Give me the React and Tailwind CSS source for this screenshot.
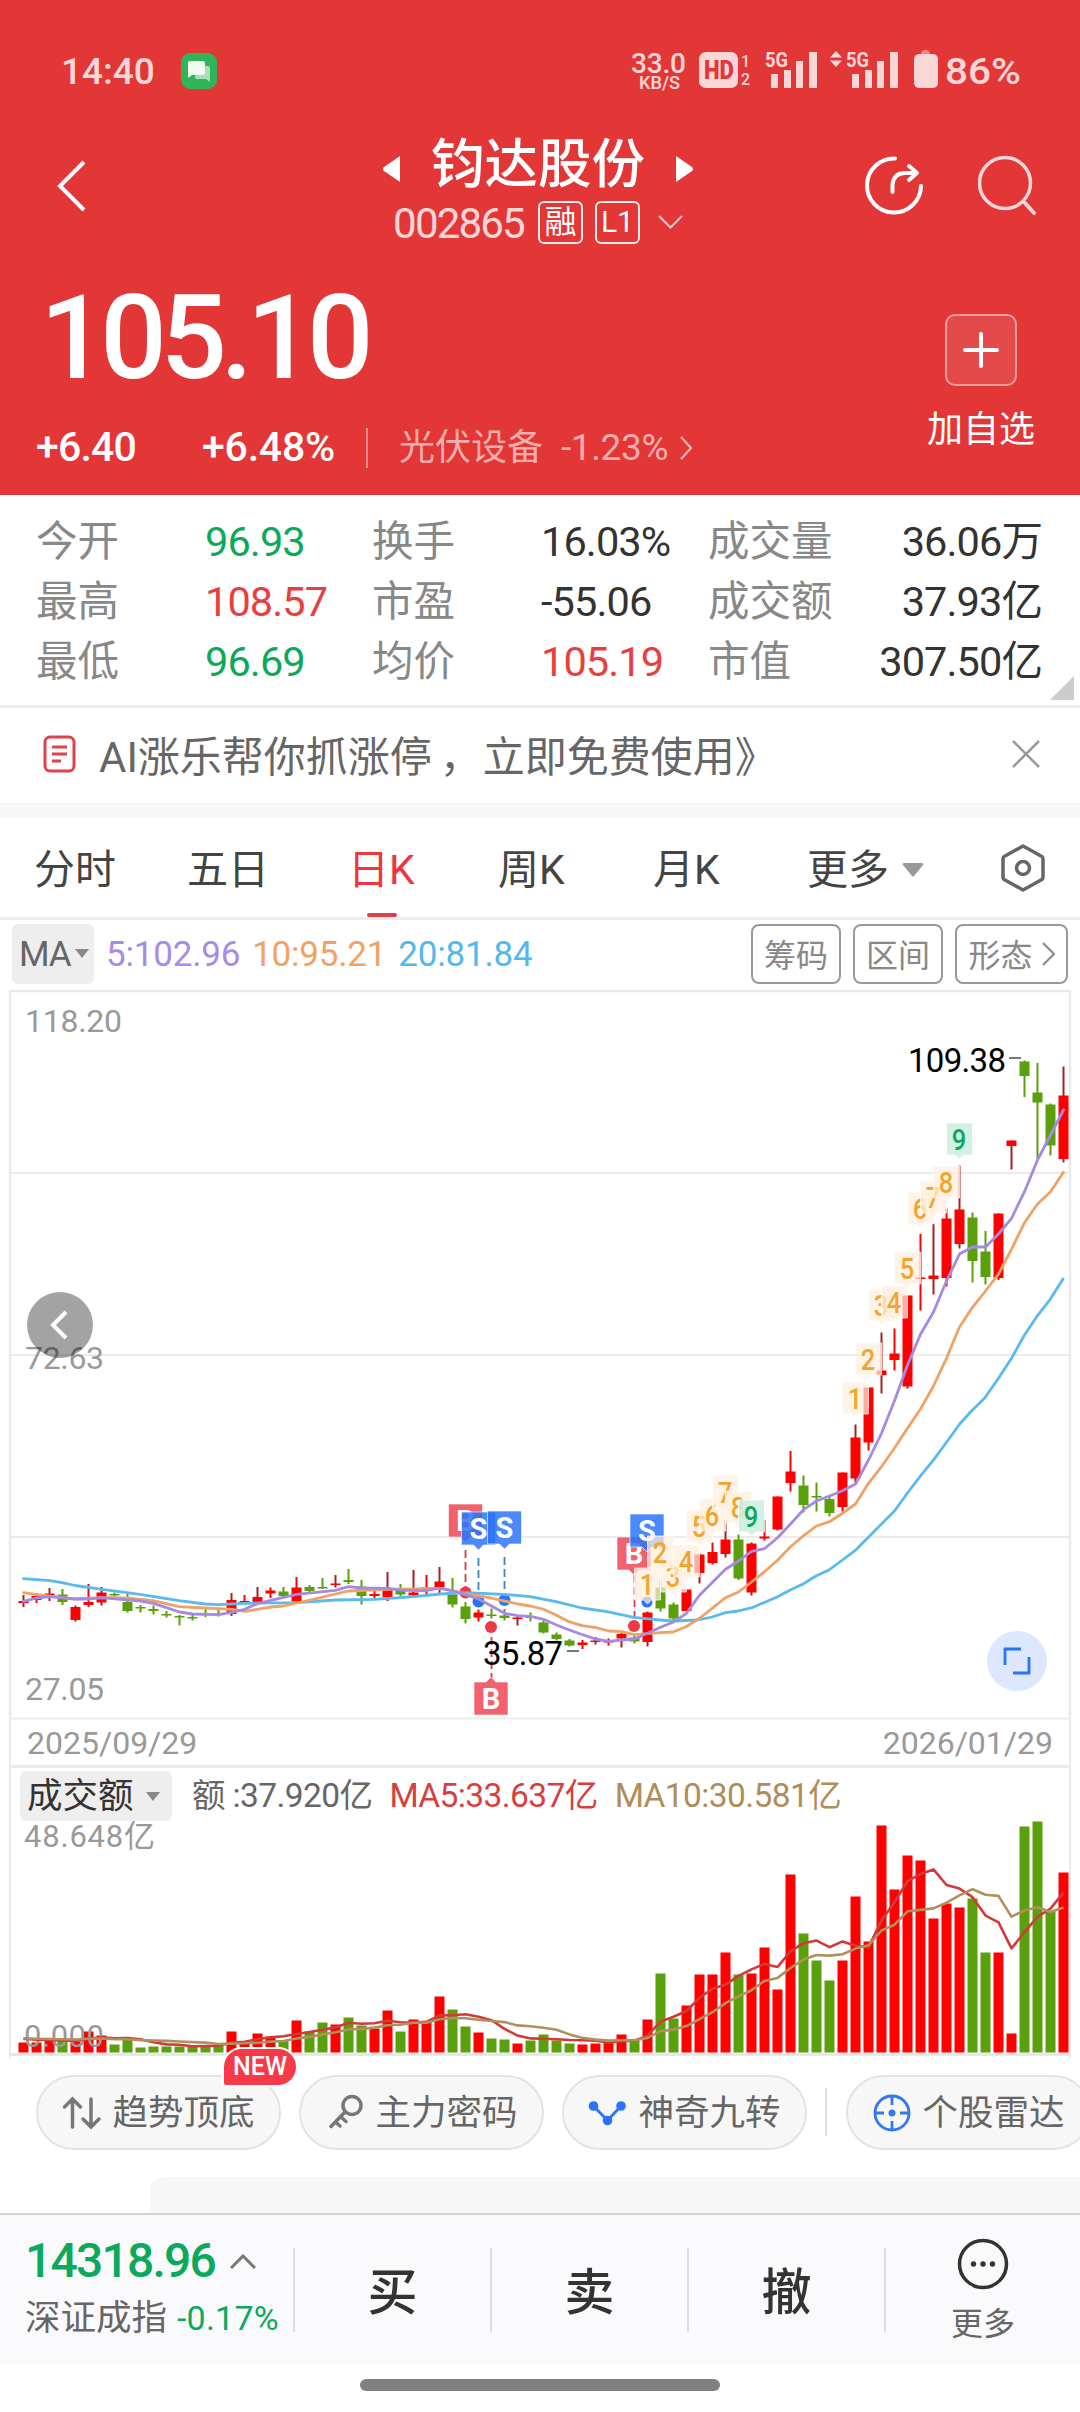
import React from 'react'
import clsx from 'clsx'

const RED = '#ff0000'
const GREEN = '#5aa00c'

// [color, high, low, body top, body bottom, turnover]
const candles = [
  ['r', 1595, 1607, 1601, 1603, 10],
  ['r', 1593, 1603, 1596, 1600, 10],
  ['r', 1588, 1601, 1593.5, 1596, 12],
  ['g', 1589, 1605, 1594.5, 1602, 12],
  ['r', 1605.5, 1621.5, 1607, 1620, 11],
  ['r', 1584, 1607, 1602, 1605, 21],
  ['r', 1587, 1605.5, 1592.5, 1602.5, 17],
  ['g', 1592.5, 1596.5, 1594, 1595.5, 8],
  ['g', 1594, 1612.5, 1602, 1611, 13],
  ['g', 1605, 1612.5, 1607, 1608.5, 5],
  ['g', 1605.5, 1614.5, 1609, 1611, 6],
  ['g', 1611, 1617.5, 1614, 1615.5, 6],
  ['g', 1615, 1625.5, 1616, 1617.5, 6],
  ['g', 1614, 1620.5, 1617, 1618.5, 6],
  ['g', 1609, 1617, 1613.5, 1615, 6],
  ['g', 1608, 1616.5, 1613.5, 1615, 7],
  ['r', 1593, 1616, 1600, 1614, 21],
  ['r', 1595, 1604, 1601, 1603, 11],
  ['r', 1587, 1602.5, 1597, 1602.5, 19],
  ['r', 1587.5, 1598, 1590.5, 1593.5, 16],
  ['g', 1587, 1598, 1591.5, 1596, 12],
  ['r', 1577, 1602, 1587.5, 1601.5, 32],
  ['g', 1585, 1593.5, 1587, 1591, 21],
  ['g', 1578, 1589, 1587, 1588.5, 30],
  ['r', 1575, 1587.5, 1583.5, 1585, 28],
  ['g', 1569, 1584, 1580, 1582, 35],
  ['g', 1580, 1604.5, 1586.5, 1596, 27],
  ['r', 1591, 1598.5, 1594, 1596, 24],
  ['r', 1572, 1601, 1590, 1597.5, 42],
  ['g', 1584, 1596, 1591, 1594.5, 21],
  ['r', 1570, 1598, 1592.5, 1595.5, 33],
  ['r', 1575, 1594, 1587.5, 1589, 31],
  ['r', 1567, 1595, 1581.5, 1587.5, 56],
  ['g', 1578, 1607.5, 1594.5, 1604.5, 43],
  ['g', 1602, 1623.5, 1606.5, 1619, 26],
  ['r', 1609.5, 1621.5, 1612.5, 1617.5, 20],
  ['g', 1608.5, 1618.5, 1614.5, 1616, 14],
  ['g', 1609, 1620.5, 1615.5, 1618, 13],
  ['r', 1616.5, 1625.5, 1617.5, 1619, 9],
  ['g', 1612.5, 1621.5, 1616, 1618, 12],
  ['g', 1620.5, 1633.5, 1622.5, 1632.5, 18],
  ['g', 1632.5, 1640.5, 1634.5, 1639, 12],
  ['g', 1639, 1646.5, 1640.5, 1645.5, 9],
  ['r', 1640, 1649, 1642.5, 1645, 8],
  ['r', 1637, 1644.5, 1640.5, 1642, 9],
  ['r', 1638.5, 1645.5, 1641, 1642.5, 10],
  ['r', 1633, 1647.5, 1634, 1638.5, 18],
  ['g', 1635.5, 1643.5, 1637.5, 1641.5, 12],
  ['r', 1611.5, 1646.5, 1612.5, 1642, 33],
  ['g', 1579.5, 1611.5, 1587.5, 1608.5, 79],
  ['g', 1602.5, 1620, 1604.5, 1618.5, 34],
  ['r', 1589.5, 1611, 1589.5, 1611, 47],
  ['r', 1553.5, 1583.5, 1554.5, 1573, 78],
  ['r', 1542.5, 1564.5, 1552, 1563, 78],
  ['r', 1519.5, 1557.5, 1539.5, 1554, 100],
  ['g', 1534.5, 1580, 1539.5, 1578.5, 78],
  ['r', 1542.5, 1595.5, 1543.5, 1592.5, 79],
  ['r', 1520, 1540.5, 1536.5, 1538.5, 105],
  ['r', 1496.5, 1530.5, 1496.5, 1529.5, 63],
  ['r', 1451, 1491.5, 1471.5, 1483, 178],
  ['g', 1475.5, 1512.5, 1485.5, 1505, 119],
  ['g', 1482.5, 1511.5, 1496, 1497.5, 92],
  ['g', 1496, 1516.5, 1499, 1513, 72],
  ['r', 1472.5, 1511.5, 1472.5, 1507, 92],
  ['r', 1424.5, 1484.5, 1437.5, 1478.5, 156],
  ['r', 1387.5, 1450.5, 1387.5, 1442.5, 111],
  ['r', 1332.5, 1393.5, 1370.5, 1375, 227],
  ['r', 1328.5, 1370.5, 1353.5, 1360, 163],
  ['r', 1295.5, 1388.5, 1295.5, 1386.5, 197],
  ['r', 1234, 1310.5, 1277.5, 1279, 192],
  ['r', 1223.5, 1294.5, 1275.5, 1279, 134],
  ['r', 1208.5, 1286.5, 1218.5, 1278, 149],
  ['r', 1165.5, 1248.5, 1209.5, 1244, 145],
  ['g', 1212.5, 1282.5, 1217.5, 1261, 154],
  ['g', 1231, 1284.5, 1251.5, 1277, 100],
  ['r', 1213.5, 1280, 1213.5, 1278, 100],
  ['r', 1140.5, 1169.5, 1140.5, 1146, 19],
  ['g', 1060.5, 1097, 1061.5, 1076, 226],
  ['g', 1063, 1158.5, 1092.5, 1102.5, 231],
  ['g', 1103.5, 1155.5, 1104.5, 1145.5, 141],
  ['r', 1066.5, 1162.5, 1095.5, 1159, 180],
]

const candleX = (i) => 23.5 + 13 * i

const ma5 =
  '23.5,1601.3 36.5,1598 49.5,1596.7 75.5,1599 88.5,1599 101.5,1597.7 140.5,1601 153.5,1603.3 179.5,1612 192.5,1614 205.5,1614.3 218.5,1614.7 231.5,1612.3 244.5,1609.3 257.5,1603.7 283.5,1597.3 296.5,1594.3 335.5,1590.3 348.5,1586.7 361.5,1588 387.5,1588.3 400.5,1590 413.5,1590.7 426.5,1590.7 439.5,1588 452.5,1590.7 465.5,1594.7 478.5,1599 491.5,1606 504.5,1613.3 517.5,1615.7 530.5,1616.3 543.5,1619.3 556.5,1625 569.5,1630 582.5,1634.7 595.5,1639 608.5,1641.3 621.5,1640 634.5,1639 647.5,1633.3 660.5,1627.3 673.5,1622 686.5,1613.3 699.5,1595.3 712.5,1582.3 725.5,1569.3 738.5,1561 751.5,1551.3 764.5,1548.7 777.5,1537.7 790.5,1524 803.5,1509.7 816.5,1501 829.5,1496 842.5,1490.7 855.5,1484 868.5,1460 881.5,1433.3 894.5,1400.7 907.5,1365 920.5,1334.3 933.5,1312 946.5,1281 959.5,1254 972.5,1247 985.5,1247 998.5,1234 1011.5,1218.3 1024.5,1191.7 1037.5,1160 1050.5,1135 1063.5,1110'
const ma10 =
  '23.5,1592.7 37,1594.7 75,1599 102,1597.7 127,1598 153,1600.7 179,1606.7 205,1608 232,1609.3 245,1611.3 271,1607 283,1606 309,1600.3 348,1591 388,1589.3 440,1588.3 465,1593.7 491,1598 518,1604 530,1606 543,1609 556,1615 569,1621.7 582,1625.7 596,1627.7 609,1631 622,1631.7 634,1634.7 660,1632.7 673,1632 686,1626.7 699.5,1618.3 725.5,1597.7 738.5,1592 751.5,1582 764.5,1571.7 777.5,1560.3 790.5,1546.7 803.5,1535.7 816.5,1526 829.5,1521.7 842.5,1513.3 855.5,1504 868.5,1483.3 881.5,1466.7 894.5,1448 907.5,1428.3 920.5,1409 933.5,1386 946.5,1358.3 959.5,1327 972.5,1307.3 985.5,1291 998.5,1274 1011.5,1249.3 1024.5,1222.7 1037.5,1204 1050.5,1191.7 1063.5,1172.3'
const ma20 =
  '23.5,1578.7 50,1580.7 62,1582.7 75,1585.5 102,1589.3 140,1594.3 179,1600.7 205,1604 218,1604.7 245,1603.3 297,1602.7 336,1600 375,1599.3 414,1596.7 440,1594 465,1592.7 504,1594.3 530,1596.7 556,1601.7 582,1608 607,1611.7 633.5,1617.3 660,1620 673,1621 698,1620 712,1617 725.6,1612.7 738,1611 752,1607.7 777.6,1596.7 790.7,1589.7 803,1584 816,1576 829,1570 855,1550.7 894.7,1510.7 906.7,1494 920.7,1475.7 933,1460.7 946.7,1442 959.7,1424 971.7,1410.7 984.7,1398 998,1379 1011.7,1358 1024,1335.7 1036.7,1316.7 1049.7,1300 1063,1279'

// nine-turn counters: [label, candle index, box top]
const counters = [
  ['1', 48, 1568],
  ['3', 50, 1560],
  ['2', 49, 1536],
  ['4', 51, 1545],
  ['5', 52, 1510],
  ['6', 53, 1499],
  ['7', 54, 1476],
  ['8', 55, 1491],
  ['9', 56, 1500],
  ['1', 64, 1382],
  ['2', 65, 1343],
  ['3', 66, 1289],
  ['4', 67, 1286],
  ['5', 68, 1252],
  ['6', 69, 1192],
  ['7', 70, 1181],
  ['8', 71, 1166],
  ['9', 72, 1123],
]

const volumeAverage = (n) =>
  candles
    .map((_, i) => {
      let sum = 0
      for (let k = i - n + 1; k <= i; k++) sum += k < 0 ? 14 : candles[k][5]
      return `${candleX(i)},${2052 - sum / n}`
    })
    .join(' ')

function Counter({ label, index, top }) {
  const x = candleX(index)
  const nine = label == '9'
  return (
    <g>
      <path
        d={`M${x - 13} ${top}h26v32h-9l-4 4l-4-4h-9z`}
        fill={nine ? '#cdeee0' : '#feeedd'}
        fillOpacity={nine ? 0.9 : 0.72}
        stroke="#fff"
        strokeOpacity="0.7"
      />
      <text
        x={x - 0.5}
        y={top + 27}
        textAnchor="middle"
        fontSize="30"
        fontWeight="500"
        textLength="14.5"
        lengthAdjust="spacingAndGlyphs"
        fill={nine ? '#10a75d' : '#f3a42f'}
      >
        {label}
      </text>
    </g>
  )
}

function Signal({ type, x, top, up }) {
  return (
    <g>
      <path
        d={
          up
            ? `M${x - 17} ${top}h12l5-5l5 5h12v33h-34z`
            : `M${x - 17} ${top}h34v33h-12l-5 5l-5-5h-12z`
        }
        fill={type == 'B' ? '#f04352' : '#2874fc'}
        fillOpacity="0.84"
        stroke="#fff"
        strokeOpacity="0.6"
      />
      <text
        x={x}
        y={top + 27}
        textAnchor="middle"
        fontSize="29"
        fontWeight="700"
        fill="#fff"
      >
        {type}
      </text>
    </g>
  )
}

function StatusBar() {
  return (
    <div className="flex h-[100px] items-start pt-[50px] pl-[61px] text-white/80">
      <span className="mt-[2px] w-[120px] text-[37px] leading-10 font-medium">14:40</span>
      <svg className="mt-[3px] shrink-0" width="36" height="36" viewBox="0 0 36 36">
        <rect width="36" height="36" rx="9" fill="#2fb457" />
        <path d="M14 13h13a2 2 0 0 1 2 2v14l-4-3H16a2 2 0 0 1-2-2z" fill="#a9dfb8" />
        <path d="M9 8h13a2 2 0 0 1 2 2v10a2 2 0 0 1-2 2H11l-4 3V10a2 2 0 0 1 2-2z" fill="#f0fbf2" />
      </svg>
      <svg className="ml-[403px] shrink-0 overflow-visible" width="410" height="44" viewBox="620 50 410 44" fill="currentColor">
        <text x="631" y="73" fontSize="28" fontWeight="500" textLength="55">33.0</text>
        <text x="639" y="89" fontSize="19" fontWeight="500" textLength="41" lengthAdjust="spacingAndGlyphs">KB/S</text>
        <rect x="699" y="52" width="39" height="36" rx="7" />
        <text x="704" y="79" fontSize="25" fontWeight="900" textLength="30" lengthAdjust="spacingAndGlyphs" fill="#e33636">HD</text>
        <text x="741" y="67" fontSize="16" fontWeight="500">1</text>
        <text x="741" y="85" fontSize="16" fontWeight="500">2</text>
        <text x="765" y="67" fontSize="21" fontWeight="700" textLength="23" lengthAdjust="spacingAndGlyphs">5G</text>
        <path d="M771 74h7v14h-7zM784 70h7v18h-7zM796 61h7v27h-7zM809 52h8v36h-8z" />
        <path d="M830 57.5l6-6.5l6 6.5zM830 60.5h12l-6 6.5z" />
        <text x="846" y="67" fontSize="21" fontWeight="700" textLength="23" lengthAdjust="spacingAndGlyphs">5G</text>
        <path d="M852 74h7v14h-7zM865 70h7v18h-7zM877 61h7v27h-7zM890 52h8v36h-8z" />
        <path d="M921 54q0-4 4.500-4t4.500 4z" opacity="0.5" />
        <rect x="914" y="54" width="24" height="34" rx="5" />
        <text x="945" y="84" fontSize="36" fontWeight="500" textLength="76" lengthAdjust="spacingAndGlyphs">86%</text>
      </svg>
    </div>
  )
}

function TitleBar() {
  return (
    <div className="flex h-[160px] justify-between pr-[42px] pl-[56px]">
      <svg className="mt-[60px] mr-[80px]" width="32" height="52" viewBox="0 0 32 52" fill="none" stroke="#fff" strokeWidth="4">
        <path d="M28 2L4 26L28 50" />
      </svg>
      <div className="mr-[31px] ml-[75px] flex flex-col items-center pt-[34px]">
        <div className="flex items-center gap-[31px]">
          <svg width="18" height="28" viewBox="0 0 18 28" className="mt-2">
            <path d="M18 1v26L2 16q-2-2 0-4z" fill="#fff" />
          </svg>
          <h1 className="text-[53.5px] leading-[62px] font-medium">钧达股份</h1>
          <svg width="18" height="28" viewBox="0 0 18 28" className="mt-2">
            <path d="M0 1v26l16-11q2-2 0-4z" fill="#fff" />
          </svg>
        </div>
        <div className="mt-[2px] flex items-center">
          <span className="mt-1 text-[42px] leading-[44px] tracking-[-1.8px] text-white/80">002865</span>
          <span className="ml-[14px] flex h-[43px] w-[45px] items-center justify-center rounded-md border-2 border-white/90 text-[32px] leading-none">
            融
          </span>
          <span className="ml-3 flex h-[43px] w-[45px] items-center justify-center rounded-md border-2 border-white/90 text-[30px] leading-none">
            L1
          </span>
          <svg className="ml-[18px]" width="25" height="14" viewBox="0 0 25 14" fill="none" stroke="#fff" strokeOpacity="0.7" strokeWidth="2">
            <path d="M1 1L12.5 12.5L24 1" />
          </svg>
        </div>
      </div>
      <div className="flex gap-[54px] pt-[54px]">
        <svg width="60" height="64" viewBox="0 0 60 64" fill="none" stroke="#fff" strokeWidth="4" strokeLinecap="round" strokeLinejoin="round">
          <path d="M31 4.500A27 27 0 1 0 57 32" />
          <path d="M28.500 38V31Q29.500 19 41 19H52M45 12l8 7l-8 7" />
        </svg>
        <svg width="60" height="64" viewBox="0 0 60 64" fill="none" stroke="#fff" strokeOpacity="0.8" strokeWidth="3.5">
          <circle cx="27" cy="29" r="25.5" />
          <path d="M47 49l9 10" strokeWidth="4" strokeLinecap="round" />
        </svg>
      </div>
    </div>
  )
}

function PriceBlock() {
  return (
    <div className="flex h-[235px] justify-between pr-[45px] pl-[36px]">
      <div className="pt-[14px]">
        <div className="ml-1 text-[117px] leading-[128px] font-medium tracking-[-6.3px]">105.10</div>
        <div className="mt-[23px] flex h-[46px] items-center">
          <span className="w-[166px] text-[41px] font-medium tracking-[-0.8px]">+6.40</span>
          <span className="w-[164px] text-[41px] font-medium tracking-[-0.2px]">+6.48%</span>
          <span className="h-[40px] w-[2px] bg-white/40" />
          <span className="ml-[31px] text-[36px] text-white/60">光伏设备</span>
          <span className="ml-[18px] text-[37px] tracking-[-0.4px] text-white/60">-1.23%</span>
          <svg className="ml-[12px]" width="12" height="24" viewBox="0 0 12 24" fill="none" stroke="#fff" strokeOpacity="0.65" strokeWidth="2">
            <path d="M1 1l10 11L1 23" />
          </svg>
        </div>
      </div>
      <div className="flex flex-col items-center pt-[54px]">
        <div className="flex h-[72px] w-[72px] items-center justify-center rounded-[10px] border-2 border-white/45 bg-white/10">
          <svg width="36" height="36" viewBox="0 0 36 36" stroke="#fff" strokeWidth="4" strokeLinecap="round">
            <path d="M2 18h32M18 2v32" />
          </svg>
        </div>
        <span className="mt-[23px] text-[36px] leading-[42px]">加自选</span>
      </div>
    </div>
  )
}

const quotes = [
  ['今开', '96.93', 'text-[#0aa95b]', '换手', '16.03%', 'text-[#333]', '成交量', '36.06万'],
  ['最高', '108.57', 'text-[#ea3d3d]', '市盈', '-55.06', 'text-[#333]', '成交额', '37.93亿'],
  ['最低', '96.69', 'text-[#0aa95b]', '均价', '105.19', 'text-[#ea3d3d]', '市值', '307.50亿'],
]

function Quotes() {
  return (
    <div className="relative h-[213px] border-b-[3px] border-[#ececec] pt-[17px] pr-[38px] pl-[36px]">
      {quotes.map((q) => (
        <div key={q[0]} className="flex h-[60px] items-center text-[41.5px] leading-[60px] tracking-[-0.9px]">
          <span className="w-[169px] tracking-normal text-[#888]">{q[0]}</span>
          <span className={clsx('w-[167px]', q[2])}>{q[1]}</span>
          <span className="w-[169px] tracking-normal text-[#888]">{q[3]}</span>
          <span className={clsx('w-[167px]', q[5])}>{q[4]}</span>
          <span className="tracking-normal text-[#888]">{q[6]}</span>
          <span className="ml-auto text-[#333]">{q[7]}</span>
        </div>
      ))}
      <svg className="absolute right-[6px] bottom-[5px]" width="24" height="24">
        <path d="M24 0v24H0z" fill="#ccc" />
      </svg>
    </div>
  )
}

function Banner() {
  return (
    <div className="flex h-[95px] items-center pr-[40px] pl-[43px] text-[#666]">
      <svg className="-mt-1" width="33" height="38" viewBox="0 0 33 38" fill="none" stroke="#e0424d" strokeWidth="3">
        <rect x="2" y="2" width="29" height="34" rx="5" />
        <path d="M9 12h15M9 19h15M9 26h9" />
      </svg>
      <p className="mt-1 ml-[23px] text-[42px] leading-[60px] whitespace-pre">
        AI涨乐帮你抓涨停<span className="ml-2">，</span><span className="ml-[1px]">立即免费使用》</span>
      </p>
      <svg className="-mt-1 ml-auto" width="28" height="28" viewBox="0 0 28 28" stroke="#999" strokeWidth="2.5">
        <path d="M1 1l26 26M27 1L1 27" />
      </svg>
    </div>
  )
}

function Tabs() {
  const tabs = [
    ['分时', 'w-[153px]'],
    ['五日', 'w-[161px]'],
    ['日K', 'w-[150px]'],
    ['周K', 'w-[155px]'],
    ['月K', 'w-[154px]'],
    ['更多', 'w-[93px]'],
  ]
  return (
    <div className="flex h-[102px] items-center border-b-[3px] border-[#ececec] pl-[34px] text-[41px] text-[#444]">
      {tabs.map((t) => (
        <div key={t[0]} className={clsx('relative h-[99px] pt-[3px] leading-[99px]', t[1], t[0] == '日K' && 'text-[#f0353f]')}>
          {t[0]}
          {t[0] == '日K' && <span className="absolute bottom-0 left-[19px] h-1 w-[30px] rounded bg-[#dd4048]" />}
        </div>
      ))}
      <svg className="mt-1 ml-[2px]" width="22" height="14">
        <path d="M2 0h18q2 0 1 2L12 13q-1 1-2 0L1 2q-1-2 1-2" fill="#999" />
      </svg>
      <svg className="ml-[77px]" width="44" height="48" viewBox="0 0 44 48" fill="none" stroke="#666" strokeWidth="3.5">
        <path d="M22 2L40 12q2 1 2 3v18q0 2-2 3L22 46L4 36q-2-1-2-3V15q0-2 2-3z" strokeLinejoin="round" />
        <circle cx="22" cy="24" r="6.5" />
      </svg>
    </div>
  )
}

function MaRow() {
  return (
    <div className="flex h-[68px] items-center pr-[12px] pl-[12px] text-[35px]">
      <div className="flex h-[60px] w-[82px] items-center rounded-md bg-[#eee] pt-[3px] pl-[7px] tracking-[-1px] text-[#666]">
        MA
        <svg width="14" height="10" className="-mt-1 ml-1">
          <path d="M0 0h14L7 9z" fill="#888" />
        </svg>
      </div>
      <div className="mt-[2px] ml-[12px] flex gap-[12px] tracking-[-0.2px]">
        <span className="text-[#a78be8]">5:102.96</span>
        <span className="text-[#f2a262]">10:95.21</span>
        <span className="text-[#54b8ee]">20:81.84</span>
      </div>
      <div className="ml-auto flex gap-[12px] text-[32px] text-[#888]">
        <span className="flex h-[60px] w-[90px] items-center justify-center rounded-lg border-2 border-[#999] pt-1">筹码</span>
        <span className="flex h-[60px] w-[90px] items-center justify-center rounded-lg border-2 border-[#999] pt-1">区间</span>
        <span className="flex h-[60px] w-[113px] items-center justify-center gap-[9px] rounded-lg border-2 border-[#999] pt-1">
          形态
          <svg className="-mt-1" width="13" height="24" viewBox="0 0 13 24" fill="none" stroke="#888" strokeWidth="2">
            <path d="M1 1l11 11L1 23" />
          </svg>
        </span>
      </div>
    </div>
  )
}

function PriceChart() {
  return (
    <svg className="block" width="1080" height="732" viewBox="0 988 1080 732">
      <path d="M10 1720V991H1070V1720" fill="none" stroke="#eaeaea" strokeWidth="2.5" />
      <path d="M10 1173H1070M10 1355H1070M10 1537H1070M10 1718.5H1070" stroke="#ebebeb" strokeWidth="2" />
      <g fontSize="32" fill="#999">
        <text x="25" y="1032" textLength="97">118.20</text>
        <text x="25" y="1369" textLength="79">72.63</text>
        <text x="25" y="1700" textLength="79">27.05</text>
      </g>
      {candles.map((c, i) => {
        const color = c[0] == 'r' ? RED : GREEN
        return (
          <g key={i}>
            <rect x={candleX(i) - 1} y={c[1]} width="2" height={c[2] - c[1]} fill={c[0] == 'r' && i % 2 == 0 ? '#a52222' : color} />
            <rect x={candleX(i) - 5} y={c[3]} width="10" height={c[4] - c[3]} fill={color} />
          </g>
        )
      })}
      <g strokeWidth="1.8" strokeDasharray="8 4" fill="none">
        <path d="M465.5 1550V1590M491.5 1637V1678M634.5 1575V1617" stroke="#e0364a" />
        <path d="M478.5 1558V1596M504.5 1557V1594M647.5 1550V1598" stroke="#3f83bd" />
      </g>
      <circle cx="465.5" cy="1592.5" r="6" fill="#ee3a46" />
      <circle cx="478.5" cy="1601.5" r="6" fill="#2874fc" />
      <circle cx="504.5" cy="1600" r="6" fill="#2874fc" />
      <circle cx="491" cy="1627" r="6" fill="#ee3a46" />
      <circle cx="634" cy="1626" r="6" fill="#ee3a46" />
      <circle cx="647" cy="1602" r="5.5" fill="#2874fc" />
      <g fill="none" strokeWidth="2.8" strokeLinejoin="round" strokeLinecap="round">
        <polyline points={ma20} stroke="#58baee" />
        <polyline points={ma10} stroke="#f0a266" />
        <polyline points={ma5} stroke="#a48ae2" />
      </g>
      <text x="483" y="1665" fontSize="33" textLength="80">35.87</text>
      <path d="M567 1651h12M1009 1058h12" stroke="#777" strokeWidth="2" />
      <text x="908" y="1072" fontSize="33" textLength="98">109.38</text>
      <Signal type="B" x={465.5} top={1504} />
      <Signal type="S" x={478.5} top={1512} />
      <Signal type="S" x={504.5} top={1511} />
      <Signal type="B" x={491} top={1682} up />
      <Signal type="B" x={634} top={1537} />
      <Signal type="S" x={647} top={1514} />
      {counters.map((c) => (
        <Counter key={c[0] + '-' + c[1]} label={c[0]} index={c[1]} top={c[2]} />
      ))}
      {/* scroll back / fullscreen buttons */}
      <circle cx="60" cy="1325" r="33" fill="#000" fillOpacity="0.36" />
      <path d="M66 1312l-13 13l13 13" fill="none" stroke="#fff" strokeWidth="4" />
      <circle cx="1017" cy="1661" r="30" fill="#dde7fd" />
      <path d="M1005 1665v-16h16M1029 1657v16h-16" fill="none" stroke="#2874fc" strokeWidth="2.8" />
    </svg>
  )
}

function VolumeChart() {
  return (
    <div className="relative mx-[9px] h-[293px] border-x-2 border-t-[3px] border-[#eaeaea]">
      <div className="relative z-10 flex h-[56px] items-center pl-[9px] text-[33.5px] tracking-[-0.6px]">
        <div className="flex h-[50px] w-[152px] items-center rounded-md bg-[#eee] pt-[2px] pl-[7px] text-[35.5px] tracking-normal text-[#333]">
          成交额
          <svg width="14" height="10" className="ml-[12px]">
            <path d="M0 0h14L7 9z" fill="#888" />
          </svg>
        </div>
        <span className="mt-px ml-[20px] whitespace-pre text-[#666]">额 :37.920亿</span>
        <span className="mt-px ml-[17px] text-[#d93e3e]">MA5:33.637亿</span>
        <span className="mt-px ml-[17px] text-[#b08d58]">MA10:30.581亿</span>
      </div>
      <svg className="absolute -top-[3px] -left-[11px]" width="1080" height="293" viewBox="0 1765 1080 293">
        {candles.map((c, i) => (
          <rect key={i} x={candleX(i) - 5} y={2052.5 - c[5]} width="10" height={c[5]} fill={c[0] == 'r' ? RED : GREEN} />
        ))}
        <g fontSize="31" fill="#999">
          <text x="24" y="1847" textLength="131">48.648亿</text>
          <text x="24" y="2047" textLength="80">0.000</text>
        </g>
        <g fill="none" strokeWidth="2.6" strokeLinejoin="round">
          <polyline points={volumeAverage(5)} stroke="#d23a3a" />
          <polyline points={volumeAverage(10)} stroke="#b0905c" />
        </g>
        <path d="M9 2054.5H1071" stroke="#e8e8e8" strokeWidth="3" />
      </svg>
    </div>
  )
}

function Pill({ label, badge, children }) {
  return (
    <div className="relative flex h-[75px] w-[245px] shrink-0 items-center justify-center gap-[10px] rounded-full border-2 border-[#e3e3e3] bg-[#f7f7f7] text-[35.5px] text-[#666]">
      <svg width="40" height="40" viewBox="0 0 40 40" fill="none" stroke="#777" strokeWidth="3.5" strokeLinecap="round">
        {children}
      </svg>
      <span className="mt-[2px]">{label}</span>
      {badge && (
        <span className="absolute -top-[30px] right-[-19px] flex h-[40px] w-[76px] items-center justify-center rounded-[20px] rounded-bl-sm border-2 border-white bg-[#f63a49] text-[25px] font-medium text-white">
          {badge}
        </span>
      )}
    </div>
  )
}

function Tools() {
  return (
    <div className="flex h-[119px] gap-[18px] overflow-x-clip pt-[17px] pl-[36px]">
      <Pill label="趋势顶底" badge="NEW">
        <path d="M10.500 34V7M2.500 14l8-8l8 8M29 6v27M21 26l8 8l8-8" />
      </Pill>
      <Pill label="主力密码">
        <circle cx="27" cy="12.500" r="9" />
        <path d="M20 19L6 33.500M10.500 29l4.500 4M16 24l5 4.500" />
      </Pill>
      <Pill label="神奇九转">
        <g stroke="none" fill="#2874fc">
          <path d="M5.500 13L19.500 27.500L33 13" fill="none" stroke="#2874fc" strokeWidth="2.8" />
          <circle cx="5.500" cy="13" r="4.800" />
          <circle cx="19.500" cy="27.500" r="4.800" />
          <circle cx="33" cy="13" r="4.800" />
        </g>
      </Pill>
      <span className="mt-[13px] mr-px h-[48px] w-[2px] shrink-0 bg-[#e0e0e0]" />
      <Pill label="个股雷达">
        <g stroke="#3478f0" strokeWidth="2.8" strokeLinecap="butt">
          <circle cx="20" cy="20" r="17" />
          <path d="M20 3v9M20 28v9M3 20h9M28 20h9" />
          <circle cx="20" cy="20" r="3.500" fill="#3478f0" stroke="none" />
        </g>
      </Pill>
    </div>
  )
}

function Footer() {
  return (
    <div className="flex h-[151px] items-center border-t-2 border-[#d4d4d6] bg-[#fafafd]">
      <div className="h-full w-[293px] pt-[19px] pl-[25px]">
        <div className="flex items-center text-[48px] leading-[54px] font-medium tracking-[-1.8px] text-[#0aa95b]">
          14318.96
          <svg className="ml-[15px]" width="26" height="15" viewBox="0 0 26 15" fill="none" stroke="#777" strokeWidth="3">
            <path d="M1 14L13 2L25 14" />
          </svg>
        </div>
        <div className="mt-[7px] flex items-center text-[35.5px] leading-[46px] whitespace-nowrap text-[#666]">
          深证成指
          <span className="ml-[10px] text-[34px] tracking-[0.2px] text-[#0aa95b]">-0.17%</span>
        </div>
      </div>
      {['买', '卖', '撤'].map((t) => (
        <div
          key={t}
          className="flex h-[84px] w-[197px] items-center justify-center border-l-2 border-[#dddde0] pt-[7px] text-[50px] font-medium text-[#333]"
        >
          {t}
        </div>
      ))}
      <div className="flex h-[84px] flex-1 flex-col items-center justify-center border-l-2 border-[#dddde0] text-[32px] leading-[44px] text-[#666]">
        <svg className="mt-1 mb-[12px] shrink-0" width="52" height="52" viewBox="0 0 52 52" fill="#333">
          <circle cx="26" cy="26" r="23.5" fill="none" stroke="#333" strokeWidth="3.5" />
          <circle cx="16.5" cy="26" r="2.7" />
          <circle cx="26" cy="26" r="2.7" />
          <circle cx="35.5" cy="26" r="2.7" />
        </svg>
        更多
      </div>
    </div>
  )
}

export default function App() {
  return (
    <div className="h-[2412px] w-[1080px] overflow-hidden bg-white font-[Roboto,'Noto_Sans_CJK_SC',sans-serif]">
      <header className="h-[495px] bg-[#e33636] text-white">
        <StatusBar />
        <TitleBar />
        <PriceBlock />
      </header>
      <Quotes />
      <Banner />
      <div className="h-[15px] bg-[#f7f7f7]" />
      <Tabs />
      <MaRow />
      <PriceChart />
      <div className="mx-[9px] flex h-[45px] items-center justify-between border-x-2 border-[#eaeaea] px-[16px] text-[32px] text-[#999]">
        <span>2025/09/29</span>
        <span>2026/01/29</span>
      </div>
      <VolumeChart />
      <Tools />
      <div className="ml-[150px] h-[36px] rounded-tl-xl bg-[#f7f7f7]" />
      <Footer />
      <div className="flex h-[48px] justify-center pt-[15px]">
        <div className="h-3 w-[360px] rounded-full bg-[#808080]" />
      </div>
    </div>
  )
}
